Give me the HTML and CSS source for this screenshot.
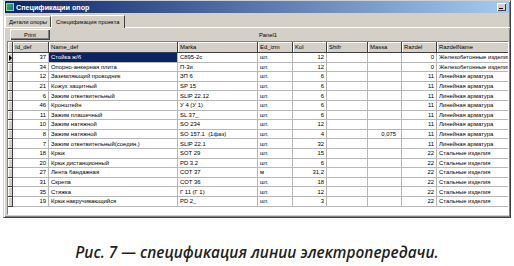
FILE: index.html
```html
<!DOCTYPE html>
<html lang="ru">

<head>
    <meta charset="UTF-8" />
    <title>Спецификации опор</title>
    <link rel="stylesheet" href="styles.css">
</head>

<body>
    <div class="window">
        <div class="titlebar">
            <span class="app-icon"></span>
            <span class="title">Спецификации опор</span>
            <span class="min-btn"></span>
        </div>

        <div class="tabs">
            <div class="tab">Детали опоры</div>
            <div class="tab active">Спецификация проекта</div>
        </div>

        <div class="panel">
            <button class="print">Print</button>
            <div class="panel-caption">Panel1</div>
        </div>

        <div class="grid">
            <table>
                <colgroup>
                    <col style="width:5px">
                    <col style="width:36px">
                    <col style="width:129px">
                    <col style="width:80px">
                    <col style="width:35px">
                    <col style="width:34px">
                    <col style="width:41px">
                    <col style="width:34px">
                    <col style="width:35px">
                    <col style="width:73px">
                </colgroup>
                <thead>
                    <tr>
                        <th class="ind"></th>
                        <th>Id_def</th>
                        <th>Name_def</th>
                        <th>Marka</th>
                        <th>Ed_izm</th>
                        <th>Kol</th>
                        <th>Shifr</th>
                        <th>Massa</th>
                        <th>Razdel</th>
                        <th>RazdelName</th>
                    </tr>
                </thead>
                <tbody>
                    <tr>
                        <td class="ind current"></td>
                        <td class="num">37</td>
                        <td class="sel">Стойка ж/б</td>
                        <td>С895-2с</td>
                        <td>шт.</td>
                        <td class="num">12</td>
                        <td></td>
                        <td></td>
                        <td class="num">0</td>
                        <td>Железобетонные изделия</td>
                    </tr>
                    <tr>
                        <td class="ind"></td>
                        <td class="num">34</td>
                        <td>Опорно-анкерная плита</td>
                        <td>П-3и</td>
                        <td>шт.</td>
                        <td class="num">12</td>
                        <td></td>
                        <td></td>
                        <td class="num">0</td>
                        <td>Железобетонные изделия</td>
                    </tr>
                    <tr>
                        <td class="ind"></td>
                        <td class="num">12</td>
                        <td>Заземляющий проводник</td>
                        <td>ЗП 6</td>
                        <td>шт.</td>
                        <td class="num">6</td>
                        <td></td>
                        <td></td>
                        <td class="num">11</td>
                        <td>Линейная арматура</td>
                    </tr>
                    <tr>
                        <td class="ind"></td>
                        <td class="num">21</td>
                        <td>Кожух защитный</td>
                        <td>SP 15</td>
                        <td>шт.</td>
                        <td class="num">6</td>
                        <td></td>
                        <td></td>
                        <td class="num">11</td>
                        <td>Линейная арматура</td>
                    </tr>
                    <tr>
                        <td class="ind"></td>
                        <td class="num">6</td>
                        <td>Зажим ответвительный</td>
                        <td>SLIP 22.12</td>
                        <td>шт.</td>
                        <td class="num">6</td>
                        <td></td>
                        <td></td>
                        <td class="num">11</td>
                        <td>Линейная арматура</td>
                    </tr>
                    <tr>
                        <td class="ind"></td>
                        <td class="num">46</td>
                        <td>Кронштейн</td>
                        <td>У 4 (У 1)</td>
                        <td>шт.</td>
                        <td class="num">6</td>
                        <td></td>
                        <td></td>
                        <td class="num">11</td>
                        <td>Линейная арматура</td>
                    </tr>
                    <tr>
                        <td class="ind"></td>
                        <td class="num">11</td>
                        <td>Зажим плашечный</td>
                        <td>SL 37_</td>
                        <td>шт.</td>
                        <td class="num">6</td>
                        <td></td>
                        <td></td>
                        <td class="num">11</td>
                        <td>Линейная арматура</td>
                    </tr>
                    <tr>
                        <td class="ind"></td>
                        <td class="num">10</td>
                        <td>Зажим натяжной</td>
                        <td>SO 234</td>
                        <td>шт.</td>
                        <td class="num">12</td>
                        <td></td>
                        <td></td>
                        <td class="num">11</td>
                        <td>Линейная арматура</td>
                    </tr>
                    <tr>
                        <td class="ind"></td>
                        <td class="num">8</td>
                        <td>Зажим натяжной</td>
                        <td>SO 157.1&nbsp;&nbsp;(1фаз)</td>
                        <td>шт.</td>
                        <td class="num">4</td>
                        <td></td>
                        <td class="num massa">0,075</td>
                        <td class="num">11</td>
                        <td>Линейная арматура</td>
                    </tr>
                    <tr>
                        <td class="ind"></td>
                        <td class="num">7</td>
                        <td>Зажим ответвительный(соедин.)</td>
                        <td>SLIP 22.1</td>
                        <td>шт.</td>
                        <td class="num">32</td>
                        <td></td>
                        <td></td>
                        <td class="num">11</td>
                        <td>Линейная арматура</td>
                    </tr>
                    <tr>
                        <td class="ind"></td>
                        <td class="num">18</td>
                        <td>Крюк</td>
                        <td>SOT 29</td>
                        <td>шт.</td>
                        <td class="num">15</td>
                        <td></td>
                        <td></td>
                        <td class="num">22</td>
                        <td>Стальные изделия</td>
                    </tr>
                    <tr>
                        <td class="ind"></td>
                        <td class="num">20</td>
                        <td>Крюк дистанционный</td>
                        <td>PD 3.2</td>
                        <td>шт.</td>
                        <td class="num">6</td>
                        <td></td>
                        <td></td>
                        <td class="num">22</td>
                        <td>Стальные изделия</td>
                    </tr>
                    <tr>
                        <td class="ind"></td>
                        <td class="num">27</td>
                        <td>Лента бандажная</td>
                        <td>COT 37</td>
                        <td>м</td>
                        <td class="num">31,2</td>
                        <td></td>
                        <td></td>
                        <td class="num">22</td>
                        <td>Стальные изделия</td>
                    </tr>
                    <tr>
                        <td class="ind"></td>
                        <td class="num">31</td>
                        <td>Скрепа</td>
                        <td>COT 36</td>
                        <td>шт.</td>
                        <td class="num">18</td>
                        <td></td>
                        <td></td>
                        <td class="num">22</td>
                        <td>Стальные изделия</td>
                    </tr>
                    <tr>
                        <td class="ind"></td>
                        <td class="num">35</td>
                        <td>Стяжка</td>
                        <td>Г 11 (Г 1)</td>
                        <td>шт.</td>
                        <td class="num">12</td>
                        <td></td>
                        <td></td>
                        <td class="num">22</td>
                        <td>Стальные изделия</td>
                    </tr>
                    <tr>
                        <td class="ind"></td>
                        <td class="num">19</td>
                        <td>Крюк накручивающийся</td>
                        <td>PD 2_</td>
                        <td>шт.</td>
                        <td class="num">3</td>
                        <td></td>
                        <td></td>
                        <td class="num">22</td>
                        <td>Стальные изделия</td>
                    </tr>
                </tbody>
            </table>
        </div>
    </div>

    <p class="caption">Рис. 7 — спецификация линии электропередачи.</p>
</body>

</html>
```

FILE: styles.css
```css
body {
    margin: 0;
    background-color: #ffffff;
    font-family: "Liberation Sans", Arial, sans-serif;
}

.window {
    margin-left: 3px;
    width: 508px;
    height: 218px;
    box-sizing: border-box;
    background-color: #d4d0c8;
    border: 1px solid;
    border-color: #d4d0c8 #404040 #404040 #d4d0c8;
    box-shadow: inset 1px 1px #ffffff, inset -1px -1px #808080;
    display: flex;
    flex-direction: column;
}

.titlebar {
    height: 12px;
    margin: 0 1px;
    background: linear-gradient(to right, #0a246a, #a6caf0);
    display: flex;
    align-items: center;
}

.app-icon {
    width: 8px;
    height: 8px;
    margin: 0 2px 0 1px;
    background: linear-gradient(135deg, #3fae6a, #1e6e8c);
    border: 1px solid #8fd8a0;
    box-sizing: border-box;
}

.title {
    flex: 1;
    color: #ffffff;
    font-size: 7.2px;
    font-weight: bold;
}

.min-btn {
    width: 9px;
    height: 8px;
    margin-right: 3px;
    background-color: #d4d0c8;
    box-shadow: inset 1px 1px #ffffff, inset -1px -1px #404040;
    position: relative;
}

.min-btn::after {
    content: "";
    position: absolute;
    left: 2px;
    bottom: 2px;
    width: 4px;
    height: 1px;
    background-color: #000000;
}

.tabs {
    height: 14px;
    display: flex;
    align-items: flex-end;
    padding-left: 1px;
    border-bottom: 1px solid #ffffff;
}

.tab {
    height: 11px;
    padding: 0 3px;
    font-size: 5.8px;
    line-height: 11px;
    color: #000000;
    box-sizing: border-box;
    border-top: 1px solid #ffffff;
    border-left: 1px solid #ffffff;
    border-right: 1px solid #404040;
}

.tab.active {
    height: 13px;
    line-height: 12px;
    padding: 0 4px;
    margin-bottom: -1px;
    background-color: #d4d0c8;
}

.panel {
    height: 13px;
    display: flex;
    align-items: center;
    padding-left: 6px;
}

.print {
    width: 40px;
    height: 11px;
    padding: 0;
    font-family: inherit;
    font-size: 5.8px;
    background-color: #d4d0c8;
    border: none;
    box-shadow: inset 1px 1px #ffffff, inset -1px -1px #404040, inset -2px -2px #808080;
}

.panel-caption {
    flex: 1;
    text-align: center;
    padding-right: 24px;
    font-size: 5.8px;
}

.grid {
    flex: 1;
    margin: 0 1px 2px 3px;
    background-color: #ffffff;
    border: 1px solid;
    border-color: #808080 #ffffff #ffffff #808080;
    overflow: hidden;
}

table {
    table-layout: fixed;
    border-collapse: separate;
    border-spacing: 0;
    width: 502px;
    font-size: 5.9px;
}

th,
td {
    padding: 0 2px;
    white-space: nowrap;
    overflow: hidden;
    text-align: left;
    font-weight: normal;
    color: #000000;
}

th {
    height: 11px;
    background-color: #d4d0c8;
    border-right: 1px solid #404040;
    border-bottom: 1px solid #404040;
    box-shadow: inset 1px 1px #ffffff;
    box-sizing: border-box;
}

td {
    height: 9.6px;
    line-height: 8px;
    border-right: 1px solid #b8b8b8;
    border-bottom: 1px solid #b8b8b8;
    box-sizing: border-box;
}

td.ind,
th.ind {
    padding: 0;
    background-color: #d4d0c8;
    border-right: 1px solid #404040;
    border-bottom: 1px solid #404040;
    box-shadow: inset 1px 1px #ffffff;
}

td.current {
    position: relative;
}

td.current::after {
    content: "";
    position: absolute;
    left: 1px;
    top: 2px;
    border-left: 3px solid #000000;
    border-top: 3px solid transparent;
    border-bottom: 3px solid transparent;
}

td.num {
    text-align: right;
}

td.massa {
    padding-right: 5px;
}

td.sel {
    background-color: #0a246a;
    color: #ffffff;
}

.caption {
    margin: 24px 0 0;
    text-align: center;
    font-family: "Open Sans", sans-serif;
    font-style: italic;
    font-weight: 600;
    font-size: 15.4px;
    color: #231f20;
}
```
